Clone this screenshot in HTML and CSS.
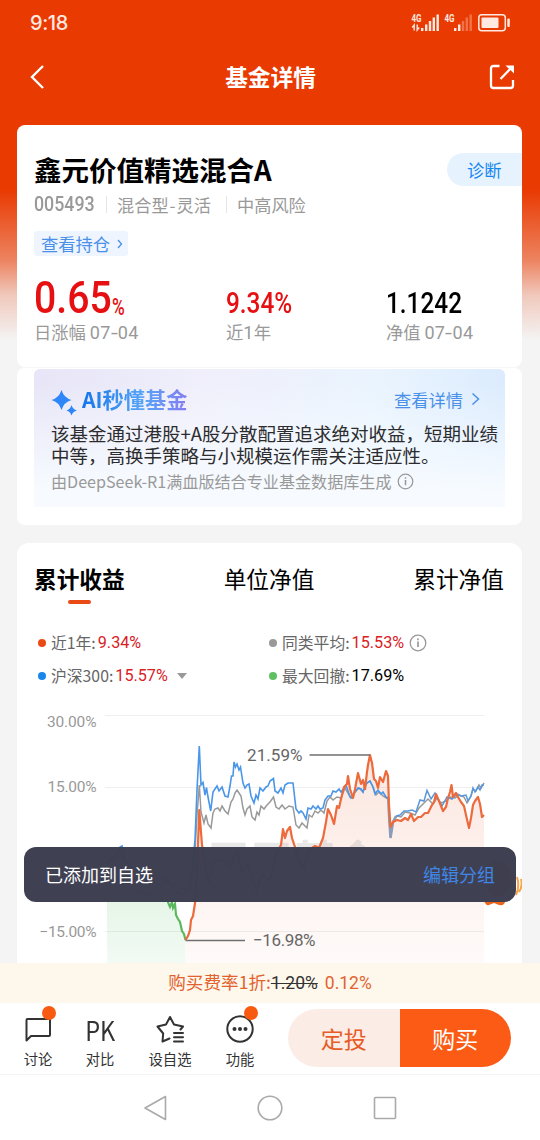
FILE: index.html
```html
<!DOCTYPE html>
<html lang="zh-CN">
<head>
    <meta charset="UTF-8">
    <meta name="viewport" content="width=device-width, initial-scale=1.0">
    <title>基金详情</title>
    <link rel="stylesheet" href="styles.css">
</head>
<body>
    <div class="screen">
        <div class="status-bar">
            <span class="time">9:18</span>
            <svg class="status-icons" width="100" height="20" viewBox="411 13 100 20">
                <g class="net-label">
                    <text x="411.5" y="22.2" textLength="10" lengthAdjust="spacingAndGlyphs">4G</text>
                    <text x="444.5" y="22.2" textLength="10" lengthAdjust="spacingAndGlyphs">4G</text>
                </g>
                <path d="M414.200 30.500V25l-2 2.500M417.200 24.500v5.500l2-2.500" stroke="#ffe9e0" stroke-width="1.400" fill="none"/>
                <g fill="#ffe9e0">
                    <rect x="421" y="28" width="2.400" height="3"/>
                    <rect x="425" y="24.500" width="2.400" height="6.500"/>
                    <rect x="428.800" y="21" width="2.400" height="10"/>
                    <rect x="432.600" y="17.500" width="2.400" height="13.500"/>
                    <rect x="436.500" y="14.500" width="2.400" height="16.500"/>
                    <rect x="454" y="28" width="2.400" height="3"/>
                    <rect x="458" y="24.500" width="2.400" height="6.500"/>
                    <g opacity=".32">
                        <rect x="461.800" y="21" width="2.400" height="10"/>
                        <rect x="465.600" y="17.500" width="2.400" height="13.500"/>
                        <rect x="469.500" y="14.500" width="2.400" height="16.500"/>
                    </g>
                    <rect x="481.500" y="17.500" width="17" height="10.500" rx="1"/>
                    <rect x="507.300" y="18.500" width="2.500" height="8.500" rx="1"/>
                </g>
                <rect x="478.800" y="14.800" width="26.500" height="16" rx="3" fill="none" stroke="#ffe9e0" stroke-width="1.500"/>
            </svg>
        </div>

        <div class="nav-bar">
            <svg width="16" height="26" viewBox="0 0 16 26"><path d="M14 2 3 13l11 11" fill="none" stroke="#fff" stroke-width="2.400"/></svg>
            <h1>基金详情</h1>
            <svg width="26" height="26" viewBox="0 0 26 26">
                <path d="M10.500 2H4.500Q2 2 2 4.500v17Q2 24 4.500 24h17Q24 24 24 21.500V16" fill="none" stroke="#fff" stroke-width="2.300"/>
                <path d="M11.500 15 22 4" stroke="#fff" stroke-width="2.300"/>
                <path d="M16.500 1.500H25V9.500z" fill="#fff"/>
            </svg>
        </div>

        <div class="card summary">
            <div class="fund-head">
                <h2>鑫元价值精选混合A</h2>
                <span class="diagnose">诊断</span>
            </div>
            <div class="fund-meta">
                <span class="code"><span class="din">005493</span></span>
                <span class="kind">混合型<i>-</i>灵活</span>
                <span class="risk">中高风险</span>
            </div>
            <div class="holding">查看持仓<svg width="6" height="10" viewBox="0 0 6 10"><path d="M1 1l3.500 4L1 9" fill="none" stroke="#4a90e8" stroke-width="1.300"/></svg></div>
            <div class="figures">
                <div class="figure day">
                    <div class="value red"><span class="din big">0.65</span><span class="din pct">%</span></div>
                    <div class="label">日涨幅 <span class="date">07<i>-</i>04</span></div>
                </div>
                <div class="figure year">
                    <div class="value red"><span class="din">9.34%</span></div>
                    <div class="label">近<span class="date">1</span>年</div>
                </div>
                <div class="figure net">
                    <div class="value"><span class="din">1.1242</span></div>
                    <div class="label">净值 <span class="date">07<i>-</i>04</span></div>
                </div>
            </div>
        </div>

        <div class="card ai-card">
            <div class="ai-box">
                <div class="ai-head">
                    <svg width="27" height="27" viewBox="0 0 27 27" fill="#2f86f8">
                        <path d="M10.500 1Q12.800 8.700 20.500 11 12.800 13.300 10.500 21 8.200 13.300 .5 11 8.200 8.700 10.500 1z"/>
                        <path d="M20.500 16Q21.700 20.300 26 21.500 21.700 22.700 20.500 26.500 19.300 22.700 15.500 21.500 19.300 20.300 20.500 16z"/>
                    </svg>
                    <span class="ai-title">AI秒懂基金</span>
                    <span class="ai-more">查看详情</span>
                    <svg width="10" height="14" viewBox="0 0 10 14"><path d="M1.500 1.500 7.500 7l-6 5.500" fill="none" stroke="#4a90e8" stroke-width="1.500"/></svg>
                </div>
                <p class="ai-text">该基金通过港股+A股分散配置追求绝对收益，短期业绩<br>中等，高换手策略与小规模运作需关注适应性。</p>
                <div class="ai-source">
                    <span>由DeepSeek-R1满血版结合专业基金数据库生成</span>
                    <svg width="17" height="17" viewBox="0 0 18 18" fill="none" stroke="#999" stroke-width="1.300"><circle cx="9" cy="9" r="7.700"/><path d="M9 7.500V13M9 4.500v1.700" stroke-width="1.600"/></svg>
                </div>
            </div>
        </div>

        <div class="card trend">
            <div class="tabs">
                <span class="tab active">累计收益</span>
                <span class="tab">单位净值</span>
                <span class="tab">累计净值</span>
            </div>
            <div class="legend">
                <div class="item"><i class="dot orange"></i>近1年:<b class="red">9.34%</b></div>
                <div class="item"><i class="dot gray"></i>同类平均:<b class="red">15.53%</b>
                    <svg class="info" width="18" height="18" viewBox="0 0 18 18" fill="none" stroke="#999" stroke-width="1.300"><circle cx="9" cy="9" r="7.800"/><path d="M9 7.500V13M9 4.500v1.700" stroke-width="1.700"/></svg>
                </div>
                <div class="item"><i class="dot blue"></i>沪深300:<b class="red">15.57%</b><i class="caret"></i></div>
                <div class="item"><i class="dot green"></i>最大回撤:<b>17.69%</b></div>
            </div>
            <svg class="chart" width="505" height="263" viewBox="17 700 505 263">
                <defs>
                    <linearGradient id="orangeFill" x1="0" y1="750" x2="0" y2="963" gradientUnits="userSpaceOnUse">
                        <stop offset="0" stop-color="#fbe3db" stop-opacity=".9"/>
                        <stop offset="1" stop-color="#fefaf9" stop-opacity=".9"/>
                    </linearGradient>
                    <linearGradient id="greenFill" x1="0" y1="860" x2="0" y2="963" gradientUnits="userSpaceOnUse">
                        <stop offset="0" stop-color="#dff2e0"/>
                        <stop offset="1" stop-color="#f2faf4"/>
                    </linearGradient>
                </defs>
                <polygon points="107,963 107,866 115,875 125,888 140,893 155,895 164,901 170,907 176,915 182,931 185.500,940 185.500,963" fill="url(#greenFill)"/>
                <polygon points="185.500,963 185.500,940 188,936 190,930 191,920 193,916 195,903 197,870 199.300,810 202,845 206,870 209,882 213,862 219,860 225,862 230,868 237,850 242,872 248,865 256,891 262,875 270,880 277,852 281,845 283,829 285,838 287,831 290,827 292,838 295,847 299,862 304,867 309,850 315,846 319,848 323,838 326,822 328,809 331,815 334,824 337,806 339,808 341,799 344,787 347,784 348,776 350,789 353,798 355,789 358,773 361,784 363,780 365,789 367,772 368,765 370,755 372,763 374,779 376,781 378,788 380,777 383,782 386,771 388,776 389,805 390.500,827 393,822 397,820 401,821 405,818 408,820 411,814 414,821 418,817 421,817 425,813 428,813 432,805 434,802 436,794 439,801 443,811 446,807 448,798 450,792 451.500,785 453,797 456,793 458,797 461,802 464,806 466,815 469,828 471,818 473,805 475,801 478,797 480,804 482,817 484,815 484,963" fill="url(#orangeFill)"/>
                <path d="M105 715.500H484M105 787.500H484M105 859.500H484M105 931.500H484" stroke="#999" stroke-opacity=".16"/>
                <text class="watermark" x="207" y="877" textLength="172">天天基金</text>
                <g class="axis">
                    <text x="47" y="727" textLength="49.500">30.00%</text>
                    <text x="47.500" y="792" textLength="49">15.00%</text>
                    <text x="56" y="862" textLength="40">0.00%</text>
                    <text x="39.500" y="936.500" textLength="57">−15.00%</text>
                </g>
                <polyline fill="none" stroke="#999" stroke-width="1.500" points="107,864 118,852 124,860 135,870 150,876 165,880 178,888 188,890 194,870 197,815 199.300,785 201,812 204,823 206,815 208,824 211,828 213,813 215,809 218,808 220,811 222,806 225,811 228,814 231,802 233,799 235,793 237,790 239,793 241,796 243,808 245,815 247,809 250,806 252,817 255,820 257,812 259,815 261,806 264,809 267,805 270,802 273.500,797 276,807 279,809 282,805 285,809 289,806 293,807 296,825 299,828 302,823 304,825 307,828 309,815 312,817 315,811 318,813 321,810 324,813 327,801 330,797 333,800 337,797 341,798 345,788 348,793 351,798 355,792 359,788 363,792 367,783 370,781 373,787 376,795 379,792 383,796 388,799 389,818 390.500,837 393,822 397,816 401,817 405,812 410,813 415,815 419,808 424,803 428,799 433,804 437,798 441,803 446,801 450,797 455,798 459,795 464,797 467,803 471,796 473,789 476,791 479,785 481,788 484,783"/>
                <polyline fill="none" stroke="#4a96e8" stroke-width="1.600" points="107,862 112,858 116,856 120,847 122,846 124,858 130,866 140,872 150,880 160,885 168,882 175,890 182,895 190,888 192,870 195,840 197,790 199.300,746 201,785 203,782.500 205,795 206.500,787.500 208,797 210.700,811 213,792 215,789 217,786 219,791 222,787 225,796 228,797 230,786 231.500,776 233,776 234,762 235.500,767 237,764 239,770 240.500,767 243,783 245,788 247,785 249,784 251,796 254,803 256,795 258,799 260,788 263,791 266,787 268,786 270,781 273.500,778.500 275,791 278,793 281,788 283,793 285,785 288,783 293,783 296,809 299,813 301,811 303,813 306,819 308,808 311,809 313,806 316,809 318,806 320,809 323,808 325,800 328,796 331,796 333,791 336,792 339,789 341,792 344,788 346,785 350,797 352,798 355,792 358,788 361,789 363,792 365,785 367,783 370,781 373,787 375,794 378,790 381,794 383,792 386,797 388.500,798"/>
                <polyline fill="none" stroke="#8a9cba" stroke-width="2.500" points="388.500,798 389,815 390.500,838 393,822 396,816"/>
                <polyline fill="none" stroke="#5a98de" stroke-width="1.500" points="396,816 400,815 404,811 408,811 412,810 416,812 420,800 424,801 427,790.500 431,799 435,793 438,799 442,806 447,797 452,799 457,794 461,796 466,795 468,801 471,796 473,788 475,792 478,787 480,790 482,785 484,785"/>
                <polyline fill="none" stroke="#5cb85c" stroke-width="2.200" points="107,866 115,875 125,888 140,893 155,895 164,901 167,900 170,907 172,902 173,908 175,904 176,915 178,919 180,922 182,931 184,934 185.500,940"/>
                <polyline fill="none" stroke="#ed6a3c" stroke-width="2.200" stroke-linejoin="round" points="185.500,940 188,936 190,930 191,920 193,916 195,903 197,870 199.300,810 202,845 206,870 209,882 213,862 219,860 225,862 230,868 237,850 242,872 248,865 256,891 262,875 270,880 277,852 281,845 283,829 285,838 287,831 290,827 292,838 295,847 299,862 304,867 309,850 315,846 319,848 323,838 326,822 328,809 331,815 334,824 337,806 339,808 341,799 344,787 347,784 348,776 350,789 353,798 355,789 358,773 361,784 363,780 365,789 367,772 368,765 370,755 372,763 374,779 376,781 378,788 380,777 383,782 386,771 388,776 389,805 390.500,827 393,822 397,820 401,821 405,818 408,820 411,814 414,821 418,817 421,817 425,813 428,813 432,805 434,802 436,794 439,801 443,811 446,807 448,798 450,792 451.500,785 453,797 456,793 458,797 461,802 464,806 466,815 469,828 471,818 473,805 475,801 478,797 480,804 482,817 484,815"/>
                <path d="M309.500 755H370M185.500 940.500H245" stroke="#707070" stroke-width="1.400"/>
                <g class="mark">
                    <text x="247" y="761" textLength="55.500">21.59%</text>
                    <text x="253" y="946" textLength="62.500">−16.98%</text>
                </g>
                <g class="mascot">
                    <ellipse cx="498" cy="879" rx="14" ry="18" fill="#f47b20"/>
                    <path d="M484 901q2 5 5 4l5-2 5 2q6 1 6-4z" fill="#ec6418"/>
                    <path d="M517 877q3 9-1 18M521 879q2 7-2 13" fill="none" stroke="#f6a447" stroke-width="2"/>
                </g>
            </svg>
        </div>

        <div class="toast"><span>已添加到自选</span><span class="edit">编辑分组</span></div>

        <div class="fee">购买费率1折:<s>1.20%</s><span>0.12%</span></div>

        <div class="actions">
            <div class="action has-dot">
                <svg width="30" height="30" viewBox="0 0 30 30" fill="none" stroke="#333" stroke-width="2" stroke-linejoin="round"><path d="M4.500 5Q3.500 5 3.500 6v20.500l4.500-4.500h18q1 0 1-1V6q0-1-1-1z"/></svg>
                <span>讨论</span>
            </div>
            <div class="action compare">
                <em>PK</em>
                <span>对比</span>
            </div>
            <div class="action favorite">
                <svg width="30" height="30" viewBox="0 0 30 30" fill="none" stroke="#333" stroke-width="2" stroke-linecap="round" stroke-linejoin="round">
                    <path d="M14.500 24.500 7.500 27.500 8.200 19.500 2.500 12.500 11 10.500 15 3 19 10.500 28 12.500 25.500 15.500"/>
                    <path d="M19 19h9M19 23.200h9M19 27.400h9"/>
                </svg>
                <span>设自选</span>
            </div>
            <div class="action more has-dot">
                <svg width="30" height="30" viewBox="0 0 30 30"><circle cx="15" cy="15" r="12.700" fill="none" stroke="#333" stroke-width="2"/><g fill="#333"><circle cx="9.500" cy="15" r="2"/><circle cx="15" cy="15" r="2"/><circle cx="20.500" cy="15" r="2"/></g></svg>
                <span>功能</span>
            </div>
            <div class="buttons">
                <button class="plan">定投</button>
                <button class="buy">购买</button>
            </div>
        </div>

        <div class="system-nav">
            <svg width="26" height="26" viewBox="0 0 26 26"><path d="M22.500 1.500v23L2 13z"/></svg>
            <svg width="26" height="26" viewBox="0 0 26 26"><circle cx="13" cy="13" r="11.800"/></svg>
            <svg width="26" height="26" viewBox="0 0 26 26"><rect x="2.500" y="2.500" width="21" height="21" rx="1"/></svg>
        </div>
    </div>
</body>
</html>
```

FILE: styles.css
```css
* {
    box-sizing: border-box;
}
body {
    margin: 0;
    font-family: "Noto Sans CJK SC", sans-serif;
    color: #000;
}
h1, h2, p {
    margin: 0;
}
i, em {
    font-style: normal;
}
svg {
    flex-shrink: 0;
}
.screen {
    position: relative;
    display: flex;
    flex-direction: column;
    width: 540px;
    height: 1140px;
    overflow: hidden;
    background: linear-gradient(#e93a02 0, #e93a02 190px, #ed8360 260px, #f0c8bb 295px, #f4f4f4 340px);
}
.status-bar {
    flex-shrink: 0;
    display: flex;
    justify-content: space-between;
    align-items: center;
    height: 46px;
    padding: 0 29px 0 30px;
}
.time {
    font: 500 20px "Inter", sans-serif;
    letter-spacing: -0.4px;
    color: #ffe9e0;
}
.net-label {
    font: 700 10px Roboto, sans-serif;
    fill: #ffe9e0;
}
.nav-bar {
    flex-shrink: 0;
    display: flex;
    justify-content: space-between;
    align-items: center;
    height: 61px;
    padding: 0 25px 0 29px;
    color: #fff;
}
.nav-bar h1 {
    font-size: 22.7px;
    font-weight: 700;
    line-height: 30px;
    padding-left: 7px;
}
.card {
    flex-shrink: 0;
    width: 505px;
    margin: 0 auto 0 17px;
    background: #fff;
    border-radius: 8px;
}
.summary {
    height: 242px;
    margin-top: 18px;
    padding: 27px 0 0 17px;
}
.red {
    color: #e60f12;
}
.din {
    display: inline-block;
    font-family: Roboto, sans-serif;
    font-weight: 500;
    transform: scaleX(.84);
    transform-origin: left bottom;
}
.fund-head {
    display: flex;
    justify-content: space-between;
    align-items: center;
    height: 34px;
}
.fund-head h2 {
    font-size: 27.5px;
    font-weight: 700;
    line-height: 34px;
}
.diagnose {
    width: 75px;
    height: 33px;
    padding-left: 20px;
    border-radius: 17px 0 0 17px;
    background: #e6f3fe;
    color: #1687ee;
    font-size: 17.3px;
    line-height: 33px;
}
.fund-meta {
    display: flex;
    align-items: center;
    height: 24px;
    margin-top: 6px;
    color: #999;
    font-size: 17.2px;
    line-height: 24px;
}
.fund-meta span {
    white-space: nowrap;
}
.fund-meta i {
    padding: 0 1px;
}
.code {
    width: 72px;
}
.code .din {
    font-size: 20px;
    transform: scaleX(.89);
}
.kind, .risk {
    border-left: 1px solid #e5e5e5;
    line-height: 17px;
    padding-left: 10px;
}
.kind {
    width: 120px;
}
.holding {
    display: flex;
    align-items: center;
    gap: 7px;
    width: 94px;
    height: 25px;
    margin-top: 15px;
    padding-left: 7px;
    border-radius: 3px;
    background: #eef5ff;
    color: #4a90e8;
    font-size: 17.3px;
    line-height: 25px;
}
.figures {
    display: flex;
    margin-top: 22px;
}
.figure.day {
    width: 192px;
}
.figure.year {
    width: 160px;
}
.figure .value {
    height: 42px;
    font-size: 29px;
    line-height: 44px;
    white-space: nowrap;
}
.value .din.big {
    width: 78px;
    font-size: 45px;
    line-height: 38px;
    transform: scaleX(.87);
}
.value .din.pct {
    font-size: 24px;
    line-height: 38px;
    transform: translateY(2px) scaleX(.72);
}
.value.red .din {
    color: #e60f12;
}
.figure .label {
    color: #999;
    font-size: 17.3px;
    line-height: 24px;
    white-space: nowrap;
}
.date {
    font-family: Roboto, sans-serif;
    font-size: 18px;
    letter-spacing: .3px;
}
.date i {
    display: inline-block;
    padding: 0 1px;
    transform: scaleX(1.4);
}
.ai-card {
    height: 158px;
    padding: 1px 17px 0;
    border-top: 1px solid #f7f7f7;
}
.ai-box {
    height: 138px;
    padding: 17px 0 0 17px;
    border-radius: 6px 6px 2px 2px;
    background:
        linear-gradient(to bottom, rgba(247, 251, 255, 0) 10%, #f7fbff 90%),
        linear-gradient(100deg, #e7e5f7 0, #f0effb 35%, #eaf4fe 70%, #d9eafe 100%);
}
.ai-head {
    display: flex;
    align-items: center;
    height: 26px;
}
.ai-head svg:first-child {
    margin-top: 6px;
}
.ai-title {
    width: 110px;
    margin-left: 4px;
    font-size: 21.2px;
    font-weight: 700;
    line-height: 26px;
    white-space: nowrap;
    background: linear-gradient(90deg, #1476ea, #55a4f8 55%, #8a78ee);
    -webkit-background-clip: text;
    background-clip: text;
    color: transparent;
}
.ai-more {
    margin: 0 8px 0 202px;
    color: #4a90e8;
    font-size: 17.3px;
}
.ai-text {
    margin-top: 11px;
    font-size: 18.5px;
    line-height: 21.5px;
    color: #2c2c2e;
    white-space: nowrap;
}
.ai-source {
    display: flex;
    align-items: center;
    gap: 5px;
    margin-top: 4px;
    color: #999;
    font-size: 16.1px;
    line-height: 22px;
    white-space: nowrap;
}
.trend {
    height: 420px;
    margin-top: 18px;
    border-radius: 12px 12px 0 0;
}
.tabs {
    display: flex;
    justify-content: space-between;
    padding: 20px 18px 0 17px;
    font-size: 22.7px;
    line-height: 31px;
}
.tab.active {
    font-weight: 700;
}
.tab.active::after {
    content: "";
    display: block;
    width: 23px;
    height: 4px;
    margin: 6px auto 0;
    border-radius: 2px;
    background: #ea4a16;
}
.legend {
    display: grid;
    grid-template-columns: 231px 1fr;
    grid-auto-rows: 33px;
    margin-top: 22px;
    padding-left: 21px;
    height: 74px;
}
.legend .item {
    display: flex;
    align-items: center;
    font-size: 15.8px;
    color: #666;
    white-space: nowrap;
}
.legend b {
    margin-left: 2px;
    font-family: Roboto, sans-serif;
    font-size: 16.2px;
    font-weight: 400;
    color: #000;
}
.legend b.red {
    color: #d9201f;
}
.dot {
    width: 8px;
    height: 8px;
    margin-right: 5px;
    border-radius: 50%;
}
.orange {
    background: #ea4a16;
}
.gray {
    background: #999;
}
.blue {
    background: #1a86ea;
}
.green {
    background: #5fc062;
}
.info {
    margin-left: 5px;
}
.caret {
    margin-left: 9px;
    border: 5px solid transparent;
    border-top: 6px solid #999;
    border-bottom: 0;
}
.chart {
    display: block;
}
.axis {
    font: 15.5px Roboto, sans-serif;
    fill: #999;
}
.mark {
    font: 17px Roboto, sans-serif;
    fill: #666;
}
.watermark {
    font-size: 43px;
    font-weight: 700;
    fill: #999;
    fill-opacity: .24;
}
.toast {
    position: absolute;
    left: 24px;
    top: 847px;
    display: flex;
    justify-content: space-between;
    width: 492px;
    height: 55px;
    padding: 0 21px;
    border-radius: 12px;
    background: rgba(59, 61, 80, .98);
    color: #fff;
    font-size: 18px;
    line-height: 54px;
}
.toast .edit {
    color: #3f86e6;
}
.fee {
    flex-shrink: 0;
    height: 40px;
    background: #fef8ec;
    color: #e2622f;
    font-size: 17.6px;
    line-height: 38px;
    text-align: center;
}
.fee s {
    color: #333;
}
.fee span {
    margin-left: 7px;
}
.fee s, .fee span {
    font-family: Roboto, sans-serif;
    font-size: 17.5px;
}
.actions {
    flex-shrink: 0;
    display: flex;
    height: 72px;
    padding: 6px 0 0 8px;
    background: #fff;
    border-bottom: 1px solid #f3f3f3;
}
.action {
    position: relative;
    display: flex;
    flex-direction: column;
    align-items: center;
    width: 60px;
    padding-top: 5px;
    color: #333;
}
.action.compare, .action.more {
    width: 64px;
}
.action.favorite {
    width: 76px;
}
.action span {
    margin-top: 4px;
    font-size: 14.3px;
    line-height: 22px;
    white-space: nowrap;
}
.action em {
    height: 30px;
    font: 27px/32px "Noto Sans CJK SC", sans-serif;
    transform: scaleX(.87);
}
.has-dot::after {
    content: "";
    position: absolute;
    left: calc(50% + 4px);
    top: -3px;
    width: 14px;
    height: 14px;
    border-radius: 50%;
    background: #f95a12;
}
.buttons {
    display: flex;
    width: 223px;
    height: 58px;
    margin-left: 16px;
}
.buttons button {
    width: 111.5px;
    padding: 0;
    border: none;
    font-family: "Noto Sans CJK SC", sans-serif;
    font-size: 23px;
}
.buttons .plan {
    border-radius: 29px 0 0 29px;
    background: #fcece6;
    color: #e75b25;
}
.buttons .buy {
    border-radius: 0 29px 29px 0;
    background: #fb5b14;
    color: #fff;
}
.system-nav {
    display: flex;
    justify-content: center;
    align-items: center;
    gap: 88.5px;
    height: 65px;
    background: #fff;
}
.system-nav svg {
    fill: none;
    stroke: #aaa;
    stroke-width: 1.6;
    stroke-linejoin: round;
}
```
